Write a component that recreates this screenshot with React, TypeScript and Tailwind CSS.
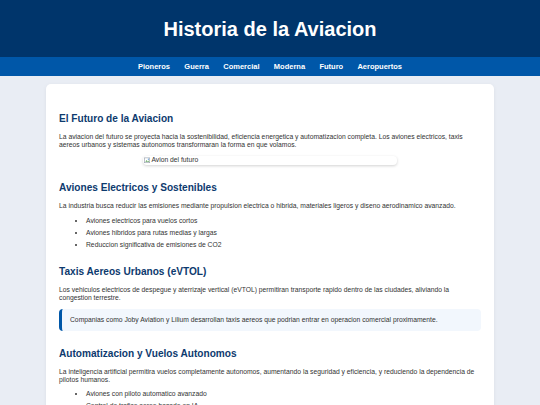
const navItems = ["Pioneros", "Guerra", "Comercial", "Moderna", "Futuro", "Aeropuertos"]

function BrokenImage({ alt }: { alt: string }) {
  return (
    <div className="mx-auto mt-[6.5px] flex h-[9.5px] w-[60%] items-center rounded-[4px] bg-white shadow-[0_1px_3px_rgba(0,0,0,0.18)]">
      <svg width="7" height="7" viewBox="0 0 16 16" className="ml-[1px] shrink-0">
        <rect x="1" y="2" width="12" height="11" fill="#fff" stroke="#9aa3ad" strokeWidth="1.5" />
        <path d="M3 11l3-4 2 3 2-2 2 3z" fill="#5ea35a" />
        <circle cx="10" cy="5" r="1.3" fill="#4a8fd8" />
      </svg>
      <span className="leading-none text-[#333]">{alt}</span>
    </div>
  )
}

function Bullets({ items }: { items: string[] }) {
  return (
    <ul className="mt-[6.5px] list-disc pl-[27px]">
      {items.map((item) => (
        <li key={item} className="mb-[4px] leading-[8px] last:mb-0">
          {item}
        </li>
      ))}
    </ul>
  )
}

export default function App() {
  return (
    <div className="min-h-[405px] bg-[#e9edf4] font-['Liberation_Sans',Arial,sans-serif] text-[6.75px] text-[#333]">
      <header className="flex h-[57px] items-center justify-center bg-[#00356b]">
        <h1 className="text-[20px] font-bold leading-none text-white">Historia de la Aviacion</h1>
      </header>
      <nav className="flex h-[19px] items-center justify-center gap-[14.3px] bg-[#0057a8]">
        {navItems.map((item) => (
          <a key={item} className="text-[7.5px] font-bold text-white">
            {item}
          </a>
        ))}
      </nav>

      <main className="px-[46px] pt-[8px]">
        <div className="rounded-[5px] bg-white px-[13px] pt-[29px] pb-[20px] shadow-[0_1px_4px_rgba(0,0,0,0.06)]">
          {/* Introduccion */}
          <section className="mb-[17px]">
            <h2 className="mb-[8px] text-[10.1px] font-bold leading-[12px] text-[#0d3a6e]">El Futuro de la Aviacion</h2>
            <p className="leading-[8px]">
              La aviacion del futuro se proyecta hacia la sostenibilidad, eficiencia energetica y automatizacion completa. Los
              aviones electricos, taxis aereos urbanos y sistemas autonomos transformaran la forma en que volamos.
            </p>
            <BrokenImage alt="Avion del futuro" />
          </section>

          <section className="mb-[17px]">
            <h2 className="mb-[8px] text-[10.1px] font-bold leading-[12px] text-[#0d3a6e]">Aviones Electricos y Sostenibles</h2>
            <p className="leading-[8px]">
              La industria busca reducir las emisiones mediante propulsion electrica o hibrida, materiales ligeros y diseno
              aerodinamico avanzado.
            </p>
            <Bullets
              items={[
                "Aviones electricos para vuelos cortos",
                "Aviones hibridos para rutas medias y largas",
                "Reduccion significativa de emisiones de CO2",
              ]}
            />
          </section>

          <section className="mb-[17px]">
            <h2 className="mb-[8px] text-[10.1px] font-bold leading-[12px] text-[#0d3a6e]">Taxis Aereos Urbanos (eVTOL)</h2>
            <p className="leading-[8px]">
              Los vehiculos electricos de despegue y aterrizaje vertical (eVTOL) permitiran transporte rapido dentro de las
              ciudades, aliviando la congestion terrestre.
            </p>
            <div className="mt-[7px] rounded-[4px] border-l-[3px] border-[#0057a8] bg-[#f2f7fd] px-[8px] py-[7px] leading-[8px]">
              Companias como Joby Aviation y Lilium desarrollan taxis aereos que podrian entrar en operacion comercial
              proximamente.
            </div>
          </section>

          <section>
            <h2 className="mb-[8px] text-[10.1px] font-bold leading-[12px] text-[#0d3a6e]">Automatizacion y Vuelos Autonomos</h2>
            <p className="leading-[8px]">
              La inteligencia artificial permitira vuelos completamente autonomos, aumentando la seguridad y eficiencia, y
              reduciendo la dependencia de pilotos humanos.
            </p>
            <Bullets
              items={[
                "Aviones con piloto automatico avanzado",
                "Control de trafico aereo basado en IA",
                "Mantenimiento predictivo con sensores inteligentes",
              ]}
            />
          </section>
        </div>
      </main>
    </div>
  )
}
